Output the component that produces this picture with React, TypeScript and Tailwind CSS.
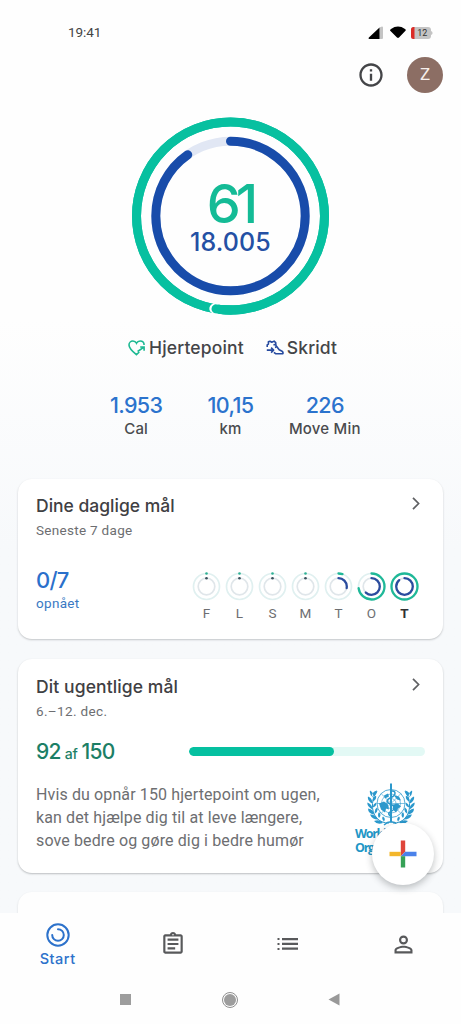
import React from 'react';
import { MdOutlineAssignment, MdPersonOutline, MdInfoOutline } from 'react-icons/md';

interface RingProps {
  radius: number;
  stroke: number;
  value: number;
  color: string;
  track: string;
  trackStroke?: number;
}

interface Day {
  label: string;
  heart: number;
  steps: number;
}

const days: Day[] = [
  { label: 'F', heart: 0, steps: 0 },
  { label: 'L', heart: 0, steps: 0 },
  { label: 'S', heart: 0, steps: 0 },
  { label: 'M', heart: 0, steps: 0 },
  { label: 'T', heart: 0.05, steps: 0.28 },
  { label: 'O', heart: 0.73, steps: 0.62 },
  { label: 'T', heart: 1, steps: 0.89 },
];

const stats = [
  { value: '1.953', label: 'Cal' },
  { value: '10,15', label: 'km' },
  { value: '226', label: 'Move Min' },
];

// Circular progress, starts at 12 o'clock. Expects to be centred on 0,0.
const Ring: React.FC<RingProps> = ({ radius, stroke, value, color, track, trackStroke = stroke }) => (
  <g transform="rotate(-90)" fill="none" strokeWidth={stroke}>
    <circle r={radius} stroke={track} strokeWidth={trackStroke} />
    {value > 0 && (
      <circle
        r={radius}
        stroke={color}
        strokeLinecap="round"
        pathLength={1}
        strokeDasharray={value >= 1 ? undefined : `${value} 2`}
      />
    )}
  </g>
);

const StatusBar = () => (
  <div className="flex h-[56px] items-center justify-between pt-[9px] pr-[28px] pl-[68px]">
    <span className="font-[Roboto] text-[13.5px] tracking-[-0.1px] text-[#444]">19:41</span>
    <div className="flex items-center">
      <svg width="16" height="14" viewBox="0 0 16 14">
        <path d="M11.5 1.5 14 .5q1 0 1 1V12q0 1-1 1h-3z" fill="#c4c4c4" />
        <path d="M11.5 1.5V13H1.5q-1.6-.3-.6-1.5z" fill="#000" />
      </svg>
      <svg className="ml-[6px]" width="16" height="13" viewBox="0 0 16 13">
        <path d="M0 4.6Q0 3.5 1 2.9Q8-1.9 15 2.9Q16 3.5 15.7 4.6L9 11.6q-1 .9-2 0z" fill="#000" />
      </svg>
      <svg className="ml-[5px]" width="22" height="14" viewBox="0 0 22 14">
        <rect x="0" y="1" width="20" height="12" rx="3" fill="#c4c4c4" />
        <path d="M20 5q1.6.3 1.6 2T20 9z" fill="#c4c4c4" />
        <path d="M3.5 1H2.5Q0 1 0 3.5v7Q0 13 2.5 13h1z" fill="#dc2b26" />
        <text x="11.2" y="10.4" textAnchor="middle" fontSize="9" fontFamily="Roboto, sans-serif" fill="#333">
          12
        </text>
      </svg>
    </div>
  </div>
);

const MainRings = () => (
  <div className="relative mx-auto h-[200px] w-[200px]">
    <svg width="200" height="200" viewBox="-99.5 -100 200 200">
      <Ring radius={94} stroke={9} value={1} color="#07c0a0" track="#07c0a0" />
      {/* end of the second lap */}
      <g fill="none" strokeLinecap="round">
        <path d="M-14 92.95A94 94 0 0 1-16.2 92.6" stroke="#fff" strokeWidth="10" />
        <path d="M0 94A94 94 0 0 1-14.5 92.87" stroke="#07c0a0" strokeWidth="9" />
        <path d="M10 93.47A94 94 0 0 1-10 93.47" stroke="#07c0a0" strokeWidth="9" />
      </g>
      <Ring radius={74.7} stroke={9} value={0.903} color="#184caa" track="#e1e7f4" />
    </svg>
    <div className="absolute inset-0 flex flex-col items-center">
      <span className="mt-[61px] pr-[1px] text-[54px] leading-[54px] font-medium tracking-[-5px] text-[#14bb96]">61</span>
      <span className="mt-[-1px] text-[25px] leading-[24px] font-medium tracking-[0.1px] text-[#2450a4]">18.005</span>
    </div>
  </div>
);

const HeartIcon = () => (
  <svg width="18" height="16" viewBox="0 0 18 16" fill="none" stroke="#1db992" strokeWidth="1.6">
    <path d="M11.3 12 8.4 14.7Q1 8.8 1 5.1C1 2.8 2.7 1 4.9 1c1.7 0 2.9.9 3.6 2.2C9.2 1.9 10.5 1 12.1 1c2.3 0 4 1.7 4 4" />
    <path d="m9.6 11.5 6-4.2M12.2 7h3.9v3.7" />
  </svg>
);

const ShoeIcon = () => (
  <svg width="18" height="16" viewBox="0 0 18 16" fill="none" stroke="#264a9f" strokeWidth="1.6" strokeLinejoin="round">
    <path d="M1.2 7V4.8L2.4 4V1.8L4 1.2l1.8 1 2.3-1.1 1.6 1.5.2 2.8 3.3 4.4 2.9 1.4q1.2.7.8 2.5H9.6L7.9 12.3" />
    <path d="m7.5 4.9 1.7-.4M9 7.4l1.5-.6" />
    <path d="M.8 10.1h6.6M5.1 7.6l2.5 2.5-2.5 2.5" />
  </svg>
);

const Chevron = () => (
  <svg width="8" height="13" viewBox="0 0 8 13" fill="none" stroke="#5f6063" strokeWidth="1.7">
    <path d="m1 .8 5.6 5.7L1 12.2" />
  </svg>
);

// Half of the laurel wreath; mirrored for the other side.
const Laurel = () => (
  <g>
    <path d="M-2 18.5C-12 19-19.5 11-18.5-1C-18.2-6-16.5-10-14-13" fill="none" strokeWidth="1" />
    <path
      d="M-14-14q-5 1-5 6 5-1 5-6M-18-7q-4-3-3-7 4 2 3 7M-19-1q-5-3-4-7 5 2 4 7M-18.5 5q-6-3-5-7 5 2 5 7M-17 10q-6-1-6-6 6 1 6 6M-13 15q-6 0-8-5 6 0 8 5M-8 18.5q-6 2-9-2 6-2 9 2M-18-3q4-2 3-6-4 2-3 6M-17.8 3q4-2 3-5-4 2-3 5M-16 9q4-3 2-6-3 2-2 6M-12 13.5q3-3 0-6-2 3 0 6M-7 17q2-3-1-5-2 2 1 5"
      stroke="none"
    />
  </g>
);

const WhoLogo = () => (
  <div className="w-[70px]">
    <svg className="ml-[12px]" width="48" height="43" viewBox="-24 -21.5 48 43" fill="#2b98cc" stroke="#2b98cc">
      <Laurel />
      <g transform="scale(-1 1)">
        <Laurel />
      </g>
      <g fill="none" strokeWidth=".8">
        <circle cy="-1" r="14" />
        <circle cy="-1" r="9.5" strokeWidth=".6" />
        <circle cy="-1" r="5" strokeWidth=".6" />
        <path d="M-14-1h28M-9.9-10.9 9.9 8.9M9.9-10.9-9.9 8.9" strokeWidth=".6" />
        <path d="M-7 20.5Q0 14 7 20.5" strokeWidth="1.3" />
      </g>
      <path d="M-12-1-7-3-3 0l1 5-3-1-1 4-4-3zM-7-9l4-2 1 3-4 2zM2 0l5-1 3 3-3 2-2 4-3-3zM3-9l5 1 2 4-4-1z" stroke="none" />
      <path d="M0-21V18" strokeWidth="2" />
      <path d="M-1-13C6-15 5-9 0-7S-5-2 0 0S4 5 0 7S-2 11 1 12" fill="none" strokeWidth="1.5" />
    </svg>
    <p className="mt-[1px] font-[Open_Sans] text-[12.5px] leading-[13.5px] font-bold tracking-[-1.3px] whitespace-nowrap text-[#2196c6]">
      World Health
      <br />
      Organization
    </p>
  </div>
);

const DailyGoals = () => (
  <section className="h-[160px] rounded-[14px] bg-white px-[18px] pt-[17px] shadow-[0_1px_2px_rgba(60,64,67,0.28)]">
    <div className="flex items-start justify-between">
      <h2 className="text-[17.5px] leading-[20px] font-medium text-[#3f4043]">Dine daglige mål</h2>
      <div className="mt-[1px] mr-[5px]">
        <Chevron />
      </div>
    </div>
    <p className="mt-[5px] font-[Roboto] text-[13.5px] leading-[18px] tracking-[0.3px] text-[#6d6e71]">Seneste 7 dage</p>
    <div className="mt-[26px] flex justify-between">
      <div>
        <p className="mt-[2px] text-[22px] leading-[26px] font-medium tracking-[-0.8px] text-[#2b70cb]">0/7</p>
        <p className="mt-[1px] font-[Roboto] text-[13.5px] leading-[18px] tracking-[0.3px] text-[#3979c3]">opnået</p>
      </div>
      <div className="mt-[5px] mr-[4px] flex">
        {days.map((day, index) => (
          <div key={index} className="flex w-[33px] flex-col items-center">
            <svg width="33" height="33" viewBox="-16.5 -16.5 33 33">
              <Ring radius={13} stroke={2.3} trackStroke={1.7} value={day.heart} color="#1fb898" track="#e0f0f0" />
              <Ring radius={8.3} stroke={2.3} trackStroke={1.7} value={day.steps} color="#2b4c9e" track="#e0e6ea" />
              {day.heart === 0 && (
                <>
                  <circle cy="-13" r="1.3" fill="#2eb194" />
                  <circle cy="-8.3" r="1.3" fill="#39505c" />
                </>
              )}
            </svg>
            <span
              className={`mt-[1px] font-[Roboto] text-[13.5px] leading-[18px] ${
                index === days.length - 1 ? 'font-bold text-[#2f3033]' : 'text-[#6d6e71]'
              }`}
            >
              {day.label}
            </span>
          </div>
        ))}
      </div>
    </div>
  </section>
);

const WeeklyGoal = () => (
  <section className="mt-[20px] h-[214px] rounded-[14px] bg-white px-[18px] pt-[18px] shadow-[0_1px_2px_rgba(60,64,67,0.32)]">
    <div className="flex items-start justify-between">
      <h2 className="text-[17.5px] leading-[20px] font-medium tracking-[0.1px] text-[#3f4043]">Dit ugentlige mål</h2>
      <div className="mt-[1px] mr-[5px]">
        <Chevron />
      </div>
    </div>
    <p className="mt-[5px] font-[Roboto] text-[13.5px] leading-[18px] tracking-[0.35px] text-[#6d6e71]">6.–12. dec.</p>
    <div className="mt-[19px] flex h-[26px] items-center justify-between">
      <div className="mt-[2px] flex items-baseline gap-[4px] text-[21px] leading-[26px] font-medium tracking-[-0.7px] text-[#1c7f66]">
        <span>92</span>
        <span className="text-[14px] tracking-[-0.3px]">af</span>
        <span>150</span>
      </div>
      <div className="mb-px h-[9px] w-[236px] overflow-hidden rounded-full bg-[#e3f9f5]">
        <div className="h-full rounded-full bg-[#05c0a0]" style={{ width: `${(92 / 150) * 100}%` }} />
      </div>
    </div>
    <div className="mt-[18px] flex justify-between">
      <p className="font-[Roboto] text-[16px] leading-[23px] tracking-[0.12px] whitespace-nowrap text-[#6d6e71]">
        Hvis du opnår 150 hjertepoint om ugen,
        <br />
        kan det hjælpe dig til at leve længere,
        <br />
        sove bedre og gøre dig i bedre humør
      </p>
      <WhoLogo />
    </div>
  </section>
);

const AddButton = () => (
  <button
    className="absolute right-[27px] bottom-[28px] flex h-[62px] w-[62px] items-center justify-center rounded-full bg-white shadow-[0_3px_7px_rgba(60,64,67,0.32)]"
    aria-label="Tilføj"
  >
    <svg width="28" height="28" viewBox="0 0 28 28">
      <path d="M11.8.5h4.4v11.3l-4.4 4.4z" fill="#df453a" />
      <path d="M.5 11.8h11.3v4.4H.5z" fill="#f3b62b" />
      <path d="M16.2 11.8h11.3v4.4H11.8z" fill="#4a82ea" />
      <path d="M11.8 16.2h4.4v11.3h-4.4z" fill="#36a156" />
    </svg>
  </button>
);

const BottomNav = () => (
  <nav className="grid h-[62px] grid-cols-4 bg-[#fefefe]">
    <div className="flex flex-col items-center pt-[9px]">
      <svg width="26" height="26" viewBox="-13 -13 26 26" fill="none" stroke="#2d72cb" strokeWidth="2">
        <circle r="10.7" />
        <path d="M0-5.8A5.8 5.8 0 1 1-5.8 0" strokeLinecap="round" />
      </svg>
      <span className="mt-[2px] text-[14.5px] leading-[18px] font-medium tracking-[0.5px] text-[#2d72cb]">Start</span>
    </div>
    <div className="flex justify-center pt-[18px]">
      <MdOutlineAssignment className="h-[26px] w-[26px] text-[#58595b]" />
    </div>
    <div className="flex justify-center pt-[24px]">
      <svg width="22" height="14" viewBox="0 0 22 14" fill="#58595b">
        <path d="M.5 1h2v2h-2zM.5 6h2v2h-2zM.5 11h2v2h-2zM5 1h16v2.2H5zM5 5.800h16v2.200H5zM5 10.600h16v2.200H5z" />
      </svg>
    </div>
    <div className="flex justify-center pt-[18px]">
      <MdPersonOutline className="h-[27px] w-[27px] text-[#58595b]" />
    </div>
  </nav>
);

const SystemNav = () => (
  <div className="flex h-[49px] items-center justify-between bg-[#fefefe] pr-[121px] pl-[120px]">
    <div className="h-[11px] w-[11px] bg-[#9d9d9d]" />
    <div className="flex h-[16px] w-[16px] items-center justify-center rounded-full border border-[#8f8f8f]">
      <div className="h-[12px] w-[12px] rounded-full bg-[#9d9d9d]" />
    </div>
    <svg width="12" height="13" viewBox="0 0 12 13">
      <path d="M11.5.5v12L.5 6.5z" fill="#999" />
    </svg>
  </div>
);

export default function App() {
  return (
    <div className="flex h-[1024px] w-[461px] flex-col overflow-hidden bg-[#fefefe] font-[Inter,sans-serif]">
      <main className="relative h-[913px] shrink-0 overflow-hidden bg-gradient-to-b from-[#fefefe] from-35% to-[#f7f9fb] to-60%">
        <StatusBar />
        <header className="flex h-[38px] items-center justify-end gap-[22px] pr-[18px]">
          <MdInfoOutline className="h-[28px] w-[28px] text-[#444548]" />
          <div className="flex h-[36px] w-[36px] items-center justify-center rounded-full bg-[#8c6e64] font-[Roboto] text-[17px] text-[#f7efeb]">
            Z
          </div>
        </header>
        <div className="mt-[22px]">
          <MainRings />
        </div>
        <div className="mt-[20px] flex h-[24px] items-center gap-[22px] pl-[128px] text-[17.5px] font-medium tracking-[0.15px] text-[#444548]">
          <div className="flex items-center gap-[3px]">
            <HeartIcon />
            <span>Hjertepoint</span>
          </div>
          <div className="flex items-center gap-[3px]">
            <ShoeIcon />
            <span>Skridt</span>
          </div>
        </div>
        <div className="mt-[32px] grid grid-cols-3 px-[89px] text-center">
          {stats.map((stat) => (
            <div key={stat.label}>
              <p className="text-[21.5px] leading-[26px] font-medium tracking-[-0.6px] text-[#2b73cd]">{stat.value}</p>
              <p className="text-[15px] leading-[22px] font-medium tracking-[0.2px] whitespace-nowrap text-[#4a4b4e]">
                {stat.label}
              </p>
            </div>
          ))}
        </div>
        <div className="mt-[39px] px-[18px]">
          <DailyGoals />
          <WeeklyGoal />
          <section className="mt-[19px] h-[80px] rounded-[14px] bg-[#fefefe] shadow-[0_1px_2px_rgba(60,64,67,0.2)]" />
        </div>
        <AddButton />
      </main>
      <BottomNav />
      <SystemNav />
    </div>
  );
}
